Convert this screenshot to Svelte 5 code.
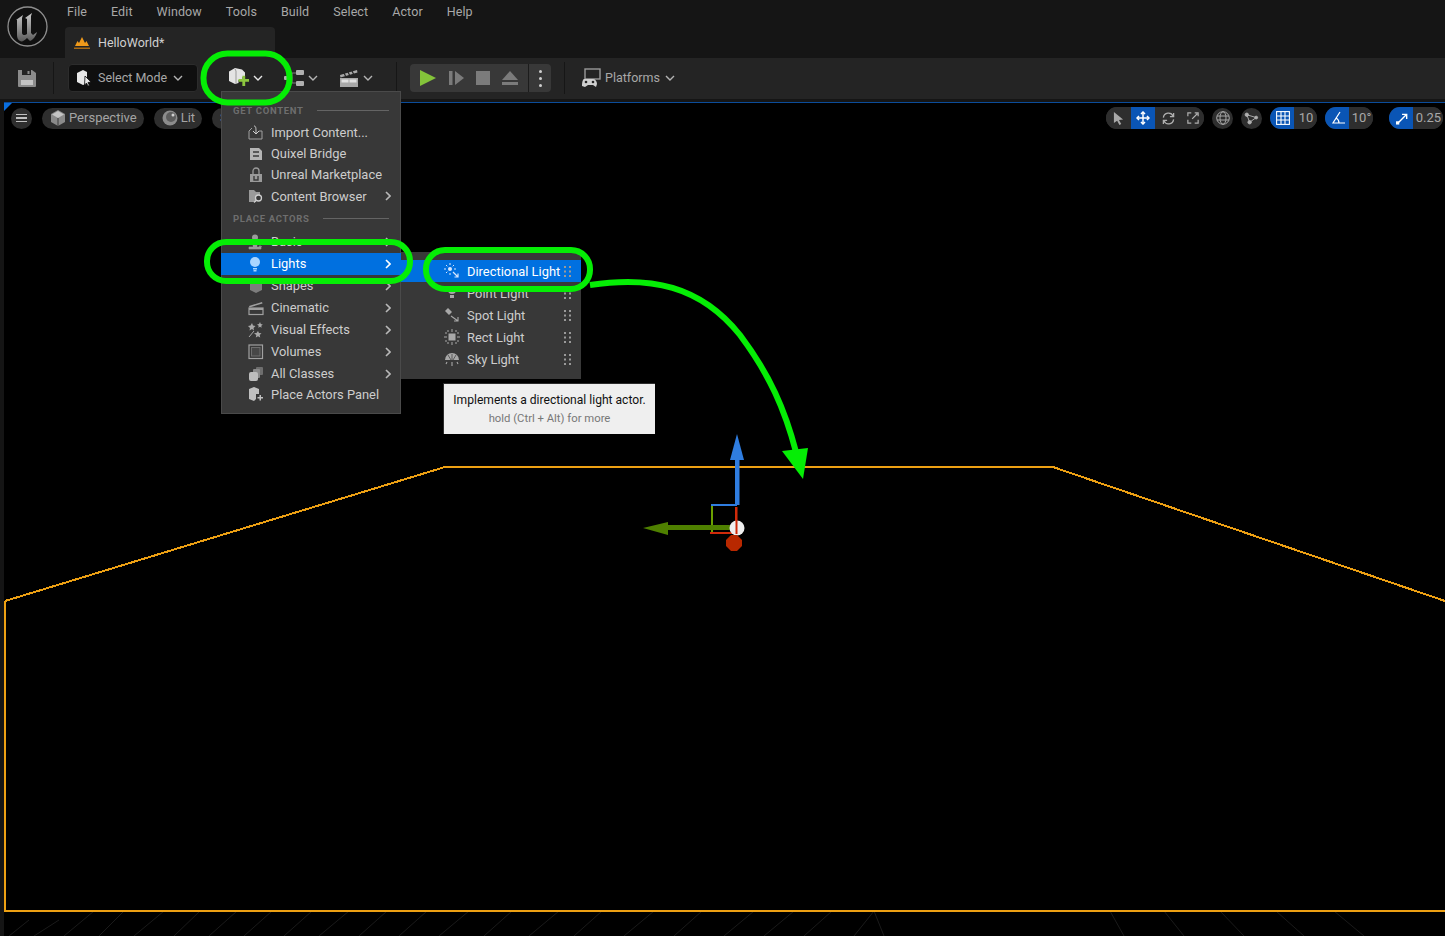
<script lang="ts">
  const menus = ["File", "Edit", "Window", "Tools", "Build", "Select", "Actor", "Help"];
  const lights = ["Directional Light", "Point Light", "Spot Light", "Rect Light", "Sky Light"];
</script>

{#snippet chev(cls = "")}
  <svg class="chev {cls}" viewBox="0 0 10 6" fill="none" stroke="currentColor" stroke-width="1.4"><path d="M1 1l4 4 4-4"/></svg>
{/snippet}

{#snippet arrow()}
  <svg class="arrow" viewBox="0 0 6 10" fill="none" stroke="currentColor" stroke-width="1.6"><path d="M1 1l4 4-4 4"/></svg>
{/snippet}

{#snippet grip()}
  <svg class="grip" viewBox="0 0 7 11" fill="#9a9a9a"><rect x="0" y="0" width="2" height="2"/><rect x="5" y="0" width="2" height="2"/><rect x="0" y="4.5" width="2" height="2"/><rect x="5" y="4.5" width="2" height="2"/><rect x="0" y="9" width="2" height="2"/><rect x="5" y="9" width="2" height="2"/></svg>
{/snippet}

{#snippet lightIcon(i: number)}
  <svg class="mi" viewBox="0 0 16 16" fill="#a8a8a8" stroke="#a8a8a8">
    {#if i === 0}
      <circle cx="6" cy="6" r="2" fill="#d8e8ff" stroke="none"/>
      <path d="M6 0v2M6 10v2M0 6h2M10 6h2M2 2l1.300 1.300M10 2L8.700 3.300M2 10l1.300-1.300" fill="none" stroke="#d8e8ff" stroke-width="1"/>
      <path d="M9 9l5 5M14 10.500V14h-3.500" fill="none" stroke="#d8e8ff" stroke-width="1.200"/>
    {:else if i === 1}
      <circle cx="8" cy="5" r="4" stroke="none"/><rect x="6" y="10" width="4" height="3" stroke="none"/>
    {:else if i === 2}
      <path d="M1 4l3-3 4 4-3 3z" stroke="none"/><path d="M7 9l7 5M14 10v4h-4" fill="none" stroke-width="1.100"/>
    {:else if i === 3}
      <rect x="4.500" y="4.500" width="7" height="7" stroke="none"/>
      <path d="M8 0v3M8 13v3M0 8h3M13 8h3M4 1v2M12 1v2M4 13v2M12 13v2M1 4h2M1 12h2M13 4h2M13 12h2" fill="none" stroke-width="1"/>
    {:else}
      <path d="M1 9a7 7 0 0 1 14 0z" stroke="none"/><path d="M8 3v6M4 4l3 5M12 4l-3 5" stroke="#383838" stroke-width=".7"/>
      <path d="M8 11v4M3 11l-1 2M13 11l1 2" fill="none" stroke-width="1.100"/>
    {/if}
  </svg>
{/snippet}

<div class="app">
  <header class="top">
    <svg class="logo" viewBox="0 0 42 42">
      <defs>
        <linearGradient id="ue" x1="0" y1="0" x2="0" y2="1">
          <stop offset="0" stop-color="#c8c8c8"/><stop offset=".6" stop-color="#8a8a8a"/><stop offset="1" stop-color="#5a5a5a"/>
        </linearGradient>
      </defs>
      <circle cx="20.500" cy="20.500" r="19.500" fill="#101010" stroke="#8e8e8e" stroke-width="1.300"/>
      <path d="M9 14l7-5-1 3v15c0 2 3 3 5 1V13l-2-1 7-5-1 3v17l2 2 4-3c-1 4-4 8-7 9l-3-3c-3 3-5 4-7 3-2-1-3-3-3-6V14z" fill="url(#ue)"/>
    </svg>
    <div class="top-right">
      <nav class="menubar">
        {#each menus as m}<span>{m}</span>{/each}
      </nav>
      <div class="tab">
        <svg class="tab-icon" viewBox="0 0 16 14"><path d="M1 10l2.500-5 1.500 2L8 1l3 6 1.500-2L15 10z" fill="#f09a1a"/><rect x="0" y="11.500" width="16" height="1.500" fill="#a86a14"/></svg>
        <span>HelloWorld*</span>
      </div>
    </div>
  </header>

  <div class="toolbar">
    <div class="save">
      <svg viewBox="0 0 18 18" width="18" height="18"><path d="M0 1h14l4 3v13a1 1 0 0 1-1 1H1a1 1 0 0 1-1-1z" fill="#8c8c8c"/><rect x="4" y="1" width="9" height="5" fill="#242424"/><rect x="9.500" y="2" width="2" height="3" fill="#8c8c8c"/><rect x="3" y="11" width="12" height="5" fill="#c4c4c4"/></svg>
    </div>
    <div class="sep"></div>
    <button class="mode">
      <svg viewBox="0 0 18 18" width="18" height="18"><path d="M1 4l6-3 4 2v4l-1 8-3 1-6-3z" fill="#e8e8e8"/><path d="M9 7l6 6-3 .5 1.500 3-1.500.5-1.500-3-2 2z" fill="#e8e8e8" stroke="#0f0f0f" stroke-width=".8"/></svg>
      <span>Select Mode</span>
      {@render chev()}
    </button>
    <div class="tool add">
      <svg viewBox="0 0 20 20" width="20" height="20"><path d="M0 3.500L6 0l7 1.500 3 3V9h-2.500v3H9.500v3L6 16 0 13z" fill="#e4e4e4"/><path d="M6 1L7 3 7 15.500" stroke="#9a9a9a" fill="none"/><path d="M9 11h4V7.500h3V11h4v3h-4v4.500h-3V14H9z" fill="#8cc63f" transform="translate(1 .5) scale(.95)"/></svg>
      {@render chev("light")}
    </div>
    <div class="tool bp">
      <svg viewBox="0 0 20 18" width="20" height="18"><rect x="0" y="7" width="5" height="4" rx="1" fill="#b0b0b0"/><rect x="12" y="1" width="8" height="5" rx="1" fill="#b0b0b0"/><rect x="12" y="12" width="8" height="5" rx="1" fill="#b0b0b0"/><path d="M5 9h3M8 4v10M8 4h4M8 14h4" stroke="#7d7d7d" fill="none"/></svg>
      {@render chev()}
    </div>
    <div class="tool cine">
      <svg viewBox="0 0 20 18" width="20" height="18"><path d="M1 6l17-5 .5 2.500L1.500 8.500z" fill="#a8a8a8"/><path d="M5 4l1.500 3M9 3l1.500 3M13 2l1.500 3" stroke="#242424" stroke-width="1.200"/><rect x="1" y="9" width="18" height="9" fill="#a8a8a8"/><rect x="2.500" y="10.500" width="7" height="3" fill="#e0e0e0"/><rect x="10.500" y="10.500" width="7" height="3" fill="#e0e0e0"/></svg>
      {@render chev()}
    </div>
    <div class="sep long"></div>
    <div class="play">
      <div class="play-main">
        <svg viewBox="0 0 16 16" width="16" height="16"><path d="M0 0l16 8-16 8z" fill="#84c43a"/></svg>
        <svg viewBox="0 0 16 16" width="16" height="16"><rect x="1" y="1" width="3.500" height="14" fill="#7b7b7b"/><path d="M7 1l9 7-9 7z" fill="#7b7b7b"/></svg>
        <span class="stop"></span>
        <svg viewBox="0 0 16 16" width="16" height="16"><path d="M8 1l8 9H0z" fill="#7b7b7b"/><rect x="0" y="12" width="16" height="3" fill="#7b7b7b"/></svg>
      </div>
      <div class="play-more"><i></i><i></i><i></i></div>
    </div>
    <div class="sep last"></div>
    <div class="platforms">
      <svg viewBox="0 0 20 20" width="20" height="20"><rect x="4" y="1" width="15" height="10" fill="none" stroke="#9a9a9a" stroke-width="1.400"/><path d="M3 11h9c2 0 4 2 4 5l-1 3-3-2H7l-3 2-3-1c0-4 1-7 2-7z" fill="#cfcfcf"/><circle cx="5" cy="14" r="1.300" fill="#242424"/><circle cx="12" cy="14" r="1.300" fill="#242424"/></svg>
      <span>Platforms</span>
      {@render chev()}
    </div>
  </div>

  <main class="viewport">
    <span class="corner"></span>
    <svg class="floor" viewBox="0 0 1441 833" preserveAspectRatio="none">
      <g stroke="#1a1a1a" fill="none">
        <path d="M5 833l20-16M30 833l25-16M60 833l30-25M95 833l25-25M130 833l30-25M170 833l26-25M205 833l28-25M240 833l28-25M280 833l28-25M315 833l30-25M355 833l28-25M395 833l28-25M435 833l30-25M480 833l28-25M525 833l30-25M570 833l28-25M620 833l30-25M670 833l28-25M720 833l30-25M760 833l30-25M800 833l28-25M850 833l20-25M880 833l-10-25M1120 833l-14-25M1180 833l-20-25M1240 833l-24-25M1300 833l-28-25M1360 833l-30-25"/>
      </g>
      <path class="outline" d="M1 498L441 364H1049L1441 498M1 498V808H1441"/>
    </svg>

    <div class="vp-bar">
      <div class="vp-left">
        <span class="round burger"><i></i><i></i><i></i></span>
        <span class="pill">
          <svg viewBox="0 0 16 16" width="16" height="16"><path d="M8 0l7 4v8l-7 4-7-4V4z" fill="#8a8a8a"/><path d="M8 1l6 3.500L8 8 2 4.500z" fill="#c4c4c4"/><path d="M8 8v8" stroke="#3a3a3a"/></svg>
          Perspective
        </span>
        <span class="pill lit">
          <svg viewBox="0 0 16 16" width="16" height="16"><circle cx="8" cy="8" r="7.500" fill="#8c8c8c"/><circle cx="9" cy="7" r="5" fill="#5c5c5c"/><circle cx="11" cy="5" r="1.500" fill="#d0d0d0"/></svg>
          Lit
        </span>
        <span class="pill show">S</span>
      </div>
      <div class="vp-right">
        <span class="seg">
          <b class="ic"><svg viewBox="0 0 12 14" width="11" height="13"><path d="M1 0l10 8-4.500.5L9 13l-2 1-2.500-4.500L1 12z" fill="#a8a8a8"/></svg></b>
          <b class="ic on"><svg viewBox="0 0 14 14" width="14" height="14" fill="none" stroke="#fff" stroke-width="1.500"><path d="M7 1v12M1 7h12"/><path d="M5 3l2-2 2 2M5 11l2 2 2-2M3 5L1 7l2 2M11 5l2 2-2 2"/></svg></b>
          <b class="ic"><svg viewBox="0 0 14 14" width="13" height="13" fill="none" stroke="#b0b0b0" stroke-width="1.400"><path d="M1.500 6A5.500 5.500 0 0 1 12 4.500M12.500 8A5.500 5.500 0 0 1 2 9.500"/><path d="M12.500 1v4h-4M1.500 13V9h4"/></svg></b>
          <b class="ic tail"><svg viewBox="0 0 14 14" width="12" height="12" fill="none" stroke="#b0b0b0" stroke-width="1.400"><path d="M1 5V1h4M9 13h4V9M1 9v4h4M9 1h4v4M6 8l6-6"/></svg></b>
        </span>
        <span class="round"><svg viewBox="0 0 14 14" width="14" height="14" fill="none" stroke="#a8a8a8" stroke-width="1"><circle cx="7" cy="7" r="6.300"/><ellipse cx="7" cy="7" rx="3" ry="6.300"/><path d="M1 5h12M1 9h12"/></svg></span>
        <span class="round"><svg viewBox="0 0 16 16" width="15" height="15" fill="#b0b0b0" stroke="#b0b0b0"><path d="M3 4l3 8M3 4l10 3M6 12l7-5" fill="none"/><circle cx="3" cy="4" r="1.800"/><circle cx="6" cy="12" r="1.800"/><circle cx="13" cy="7" r="1.500"/></svg></span>
        <span class="seg">
          <b class="ic on first"><svg viewBox="0 0 14 14" width="14" height="14" fill="none" stroke="#fff" stroke-width="1.100"><rect x=".6" y=".6" width="12.800" height="12.800"/><path d="M5 1v12M9 1v12M1 5h12M1 9h12"/></svg></b>
          <b class="val v2">10</b>
        </span>
        <span class="seg">
          <b class="ic on first"><svg viewBox="0 0 14 14" width="14" height="14" fill="none" stroke="#fff" stroke-width="1.200"><path d="M9 1L2 12h12M5 7c2 1 3 3 3 5"/></svg></b>
          <b class="val v3">10°</b>
        </span>
        <span class="seg scale">
          <b class="ic on first"><svg viewBox="0 0 14 14" width="13" height="13"><path d="M3 11l8-8M6.500 2.500H11.500V7.500" fill="none" stroke="#fff" stroke-width="1.500"/><rect x="0" y="10" width="3.500" height="3.500" fill="#fff"/></svg></b>
          <b class="val v4">0.25</b>
        </span>
      </div>
    </div>

    <svg class="gizmo" viewBox="0 0 110 130">
      <path d="M72 99V71" stroke="#6ba000" stroke-width="2" fill="none"/>
      <path d="M71 71h26" stroke="#2f7de0" stroke-width="2" fill="none"/>
      <path d="M70 99h26V73" stroke="#d02a0a" stroke-width="2" fill="none"/>
      <path d="M3 94l25-6v3h67v5H28v5z" fill="#4f8000"/>
      <rect x="95" y="26" width="4.500" height="45" fill="#2f7de0"/>
      <path d="M97 0l7 26H90z" fill="#2f7de0"/>
      <circle cx="97" cy="94" r="7.500" fill="#efefef"/>
      <path d="M95.500 73h2v27h-2z" fill="#d02a0a"/>
      <path d="M91 101h6l5 5v6l-5 5h-6l-5-5v-6z" fill="#b82800"/>
    </svg>
  </main>

  <div class="menu">
    <div class="head"><span>GET CONTENT</span><i></i></div>
    <div class="row">
      <svg class="mi" viewBox="0 0 16 16" fill="none" stroke="#a0a0a0"><path d="M4 3L1 6v8h13V6h-3"/><path d="M6 1c2 0 2 2 2 7M5 6l3 3 3-3" stroke="#cfcfcf"/></svg>
      <span>Import Content...</span>
    </div>
    <div class="row">
      <svg class="mi" viewBox="0 0 16 16"><path d="M2 2h9l3 3v9H2z" fill="#b4b4b4"/><path d="M5 6h6M5 10h6" stroke="#3a3a3a" stroke-width="1.600"/></svg>
      <span>Quixel Bridge</span>
    </div>
    <div class="row">
      <svg class="mi" viewBox="0 0 16 16"><path d="M5 7V4a3 3 0 0 1 6 0v3" fill="none" stroke="#9a9a9a" stroke-width="1.300"/><rect x="2" y="7" width="12" height="8" fill="#9a9a9a"/><path d="M6 9v4h4V9" fill="none" stroke="#3a3a3a" stroke-width="1.400"/></svg>
      <span>Unreal Marketplace</span>
    </div>
    <div class="row">
      <svg class="mi" viewBox="0 0 16 16"><path d="M1 2h5l2 2h4v3H8v7H1z" fill="#9a9a9a"/><circle cx="10.500" cy="10" r="3" fill="none" stroke="#cfcfcf" stroke-width="1.300"/><path d="M8 12.500l-2 2" stroke="#cfcfcf" stroke-width="1.300"/></svg>
      <span>Content Browser</span>
      {@render arrow()}
    </div>
    <div class="head place"><span>PLACE ACTORS</span><i></i></div>
    <div class="row sub">
      <svg class="mi" viewBox="0 0 16 16"><circle cx="7" cy="3.500" r="3" fill="#9a9a9a"/><path d="M4 6h6l-1 7H5z" fill="#9a9a9a"/><path d="M1 13h12v2H1zM12 11v3M14 12.500h-3" fill="#9a9a9a" stroke="#9a9a9a" stroke-width=".6"/></svg>
      <span>Basic</span>
      {@render arrow()}
    </div>
    <div class="row sub active">
      <svg class="mi" viewBox="0 0 16 16"><circle cx="7" cy="6" r="5" fill="#a9d5ff"/><rect x="5" y="12" width="4" height="1.500" fill="#a9d5ff"/><rect x="5.500" y="14" width="3" height="1.500" fill="#a9d5ff"/></svg>
      <span>Lights</span>
      {@render arrow()}
    </div>
    <div class="row sub">
      <svg class="mi" viewBox="0 0 16 16"><path d="M8 1l6 3v8l-6 3-6-3V4z" fill="#7d7d7d"/></svg>
      <span>Shapes</span>
      {@render arrow()}
    </div>
    <div class="row sub">
      <svg class="mi" viewBox="0 0 16 16"><path d="M1 6l13-4 .5 1.500L1.500 7.500z" fill="#a0a0a0"/><rect x="1" y="8" width="14" height="6.500" fill="none" stroke="#a0a0a0" stroke-width="1.200"/><rect x="1" y="8" width="14" height="2" fill="#a0a0a0"/></svg>
      <span>Cinematic</span>
      {@render arrow()}
    </div>
    <div class="row sub">
      <svg class="mi" viewBox="0 0 16 16" fill="#a8a8a8"><path d="M4 1l1 2.500 2.500.5L5.500 6 6 8.500 4 7 1.500 8.500 2 6 0 4l2.500-.5zM12 0l.8 2 2 .5-1.500 1.300.3 2-1.600-1-1.700 1 .4-2L9 2.500l2-.5zM10 9l1 2 2.500.3-1.800 1.700.5 2.500-2.200-1.200-2.200 1.200.5-2.500L6 11.300 8.500 11z"/><path d="M1 15l5-6" stroke="#a8a8a8"/></svg>
      <span>Visual Effects</span>
      {@render arrow()}
    </div>
    <div class="row sub">
      <svg class="mi" viewBox="0 0 16 16" fill="none" stroke="#a0a0a0"><rect x="1" y="1" width="13.500" height="13.500" stroke-width="1.200"/><rect x="3.500" y="3.500" width="8.500" height="8.500" stroke="#6e6e6e" fill="#474747"/></svg>
      <span>Volumes</span>
      {@render arrow()}
    </div>
    <div class="row sub">
      <svg class="mi" viewBox="0 0 16 16"><rect x="8" y="1" width="7" height="8" rx="1" fill="#6e6e6e"/><rect x="5" y="3" width="7" height="9" rx="1" fill="#8a8a8a"/><rect x="1" y="6" width="9" height="9" rx="2" fill="#bdbdbd"/></svg>
      <span>All Classes</span>
      {@render arrow()}
    </div>
    <div class="row last">
      <svg class="mi" viewBox="0 0 16 16"><path d="M1 3l5-2 5 2v5H8v5l-2 2-5-2z" fill="#c0c0c0"/><path d="M9.500 11h2V9h1.500v2h2v1.500h-2v2h-1.500v-2h-2z" fill="#c0c0c0"/></svg>
      <span>Place Actors Panel</span>
    </div>
  </div>

  <div class="submenu">
    {#each lights as l, i}
      <div class="sub-row" class:active={i === 0}>
        {@render lightIcon(i)}
        <span>{l}</span>
        {@render grip()}
      </div>
    {/each}
  </div>

  <div class="tip">
    <p>Implements a directional light actor.</p>
    <small>hold (Ctrl + Alt) for more</small>
  </div>

  <svg class="notes" viewBox="0 0 1445 936" fill="none" stroke="#05ee05" stroke-width="6">
    <rect x="203.500" y="53.500" width="86" height="49" rx="24"/>
    <rect x="207" y="242" width="203" height="39" rx="19"/>
    <rect x="426" y="250" width="164" height="39" rx="19"/>
    <path d="M590 285C650 276 700 285 740 335C770 375 785 410 796 452"/>
    <path d="M782 451l26-3-5 31z" fill="#05ee05" stroke="none"/>
  </svg>
</div>

<style>
  :global(body) { margin: 0; background: #000; }

  .app {
    position: relative; width: 1445px; height: 936px; overflow: hidden;
    display: flex; flex-direction: column; background: #151515;
    font-family: Roboto, "Liberation Sans", sans-serif; font-size: 13px; color: #c0c0c0;
  }

  .top { height: 58px; display: flex; flex: none; }
  .logo { width: 42px; height: 42px; margin: 6px 0 0 7px; flex: none; }
  .top-right { margin-left: 16px; display: flex; flex-direction: column; }
  .menubar { height: 27px; display: flex; gap: 24px; margin-left: 2px; line-height: 24px; color: #a8a8a8; font-size: 12.5px; letter-spacing: .1px; }
  .tab {
    width: 210px; height: 31px; box-sizing: border-box; background: #242424; border-radius: 4px 4px 0 0;
    display: flex; align-items: center; gap: 8px; padding: 0 0 0 9px; color: #d0d0d0; font-size: 12.5px;
  }
  .tab-icon { width: 16px; height: 14px; }

  .toolbar { height: 41px; box-sizing: border-box; padding-bottom: 1px; flex: none; background: #242424; display: flex; align-items: center; position: relative; }
  .save { width: 53px; display: flex; justify-content: center; }
  .sep { width: 1px; height: 32px; background: #161616; }
  .mode {
    margin-left: 14px; width: 130px; height: 28px; box-sizing: border-box; background: #0f0f0f; border: 1px solid #2c2c2c;
    border-radius: 4px; display: flex; align-items: center; gap: 4px; padding: 0 0 1px 7px;
    color: #a8a8a8; font: inherit; font-size: 12.5px;
  }
  .chev { width: 10px; height: 6px; color: #b4b4b4; flex: none; }
  .chev.light { color: #e8e8e8; }
  .mode .chev { margin-left: 2px; }
  .tool { display: flex; align-items: center; gap: 4px; }
  .tool.add { margin-left: 31px; gap: 4px; }
  .tool.bp { margin-left: 21px; }
  .tool.cine { margin-left: 21px; gap: 4px; }
  .sep.long { margin-left: 23px; }
  .play { margin-left: 13px; width: 141px; height: 28px; background: #383838; border-radius: 4px; display: flex; }
  .play-main { width: 118px; display: flex; align-items: center; gap: 12px; padding-left: 10px; box-sizing: border-box; }
  .stop { width: 14px; height: 14px; background: #7b7b7b; }
  .play-more { flex: 1; border-left: 1px solid #1c1c1c; display: flex; flex-direction: column; align-items: center; justify-content: center; gap: 4px; }
  .play-more i { width: 3px; height: 3px; background: #cfcfcf; border-radius: 50%; }
  .sep.last { margin-left: 13px; }
  .platforms { margin-left: 16px; display: flex; align-items: center; gap: 4px; color: #a8a8a8; font-size: 12.5px; }
  .platforms span { padding-bottom: 2px; }
  .platforms .chev { margin-left: 1px; }

  .viewport {
    position: relative; flex: 1; margin: 3px 0 0 4px; background: #000;
    border-top: 1px solid #0b4c9a;
  }
  .corner {
    position: absolute; top: 0; left: 0; width: 0; height: 0;
    border-top: 8px solid #0a6fe0; border-right: 8px solid transparent;
  }
  .floor { position: absolute; left: 0; top: 0; width: 100%; height: 100%; }
  .outline { fill: none; stroke: #eda013; stroke-width: 2; shape-rendering: crispEdges; }

  .vp-bar { position: relative; height: 22px; margin-top: 4px; padding-right: 2px; display: flex; justify-content: space-between; }
  .vp-left, .vp-right { display: flex; align-items: center; }
  .vp-left { margin-left: 7px; gap: 10px; }
  .vp-right { gap: 8px; }
  .round {
    width: 21px; height: 21px; border-radius: 50%; background: #2e2e2e; flex: none;
    display: flex; align-items: center; justify-content: center;
  }
  .burger { flex-direction: column; gap: 2.500px; }
  .burger i { width: 11px; height: 1.200px; background: #c0c0c0; }
  .pill {
    height: 21px; box-sizing: border-box; border-radius: 11px; background: #2e2e2e; display: flex; align-items: center;
    gap: 3px; padding: 0 7px 1px 8px; color: #a4a4a4; font-size: 13px;
  }
  .show { width: 30px; }
  .seg { display: flex; height: 22px; border-radius: 11px; overflow: hidden; background: #2e2e2e; gap: 1px; }
  .seg.scale { margin-left: 8px; }
  .ic { width: 24px; box-sizing: border-box; background: #2e2e2e; display: flex; align-items: center; justify-content: center; }
  .ic.tail { width: 23px; }
  .ic.on { background: #0a55b5; }
  .ic.first { padding-left: 2px; }
  .val { display: flex; align-items: center; justify-content: center; font-weight: 400; color: #a8a8a8; font-size: 13px; background: #2e2e2e; padding-bottom: 1px; box-sizing: border-box; }
  .v2 { width: 22px; }
  .v3 { width: 23px; }
  .v4 { width: 29px; }

  .gizmo { position: absolute; left: 636px; top: 331px; width: 110px; height: 130px; }

  .menu {
    position: absolute; left: 221px; top: 91px; width: 180px; height: 323px; box-sizing: border-box;
    background: #383838; border: 1px solid #4a4a4a; padding-top: 10px;
  }
  .head { display: flex; align-items: center; gap: 13px; height: 17px; padding: 0 11px; font-size: 9.500px; letter-spacing: .7px; color: #6e6e6e; font-weight: 700; }
  .head i { flex: 1; height: 1px; background: #646464; }
  .head.place { margin-top: 2px; height: 20px; }
  .row { height: 21.200px; display: flex; align-items: center; position: relative; padding-left: 26px; color: #cdcdcd; font-size: 12.900px; }
  .row.sub { height: 22px; }
  .row.last { height: 19.200px; }
  .head + .row { margin-top: 3px; }
  .head.place + .row { margin-top: 2px; }
  .mi { width: 16px; height: 16px; flex: none; margin-right: 7px; }
  .arrow { position: absolute; right: 9px; top: 50%; margin-top: -5px; width: 6px; height: 10px; color: #b8b8b8; }
  .active { background: #0070e0; color: #fff; }
  .active .arrow { color: #fff; }
  .row.active { margin: 0 -1px; padding-left: 27px; }
  .row.active .arrow { right: 10px; }

  .submenu {
    position: absolute; left: 401px; top: 252px; width: 180px; height: 127px; box-sizing: border-box;
    background: #383838; padding-top: 8px;
  }
  .sub-row { height: 22px; display: flex; align-items: center; padding-left: 43px; color: #cdcdcd; font-size: 12.900px; position: relative; }
  .sub-row.active { color: #fff; }
  .grip { position: absolute; right: 10px; top: 5.500px; width: 7px; height: 11px; }

  .tip {
    position: absolute; left: 443px; top: 383px; width: 212px; height: 51px; box-sizing: border-box;
    background: #efefef; border: 1px solid #2c2c2c; border-width: 1px 0 0 1px;
    display: flex; flex-direction: column; align-items: center; padding-top: 8px; color: #111;
  }
  .tip p { margin: 0; font-size: 12.100px; line-height: 16px; }
  .tip small { font-size: 11.300px; color: #777; margin-top: 4px; line-height: 14px; }

  .notes { position: absolute; left: 0; top: 0; width: 1445px; height: 936px; pointer-events: none; }
</style>
